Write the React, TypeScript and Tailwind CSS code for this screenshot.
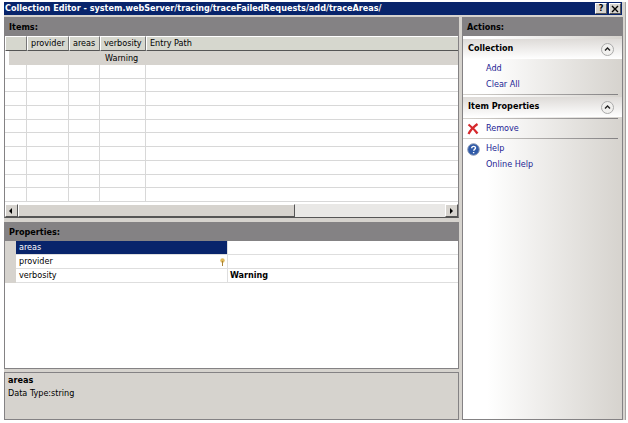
import React from "react";

interface PanelTitleProps {
  children: React.ReactNode;
}

function PanelTitle({ children }: PanelTitleProps): JSX.Element {
  return (
    <h2 className="h-[19px] shrink-0 bg-[#848284] pl-[5px] leading-[20px] font-bold">
      {children}
    </h2>
  );
}

const columns = [
  { label: "", width: "w-[22px]" },
  { label: "provider", width: "w-[42px]" },
  { label: "areas", width: "w-[31px]" },
  { label: "verbosity", width: "w-[46px]" },
  { label: "Entry Path", width: "w-auto" },
];

const emptyRows = Array.from({ length: 10 }, (_, i) => i);

function ItemsTable(): JSX.Element {
  return (
    <div className="flex h-[182px] shrink-0 flex-col border border-t-0 border-[#848284] border-b-[#555] bg-white">
      <table className="h-[166px] w-full table-fixed border-separate border-spacing-0">
        <thead>
          <tr className="h-[15px] bg-[#d6d7ce]">
            {columns.map((col, i) => (
              <th
                key={i}
                className={`${col.width} h-[15px] border-t border-t-white border-b border-b-[#555] border-l border-l-white p-0 pl-[3px] text-left font-normal leading-[13px] whitespace-nowrap not-last:border-r not-last:border-r-[#777]`}
              >
                {col.label}
              </th>
            ))}
          </tr>
        </thead>
        <tbody>
          <tr className="h-[14px] bg-[#d6d3ce]">
            <td className="border-l-4 border-white p-0" />
            <td className="p-0" />
            <td className="p-0" />
            <td className="p-0 pl-[5px] leading-[14px]">Warning</td>
            <td className="p-0" />
          </tr>
          {emptyRows.map((row) => (
            <tr key={row}>
              {columns.map((_, i) => (
                <td
                  key={i}
                  className="border-b border-[#d8d8d8] p-0 not-last:border-r"
                />
              ))}
            </tr>
          ))}
        </tbody>
      </table>
      <div className="mt-auto flex h-[13px] bg-[#e9e8e6]">
        <ScrollButton label="Scroll left" points="6,3 6,9 3,6" />
        <div className="w-[277px] border border-t-white border-r-[#555] border-b-[#555] border-l-white bg-[#d6d3ce]" />
        <div className="flex-1" />
        <ScrollButton label="Scroll right" points="4,3 4,9 7,6" />
      </div>
    </div>
  );
}

interface ScrollButtonProps {
  label: string;
  points: string;
}

function ScrollButton({ label, points }: ScrollButtonProps): JSX.Element {
  return (
    <button
      aria-label={label}
      className="w-[13px] border border-t-white border-r-[#555] border-b-[#555] border-l-white bg-[#d6d3ce]"
    >
      <svg viewBox="0 0 11 11" className="size-[11px]">
        <polygon points={points} fill="#000" />
      </svg>
    </button>
  );
}

const properties = [
  { name: "areas", value: "", selected: true, required: false },
  { name: "provider", value: "", selected: false, required: true },
  { name: "verbosity", value: "Warning", selected: false, required: false },
];

function PropertyGrid(): JSX.Element {
  return (
    <div className="flex-1 border border-t-0 border-[#848284] bg-white">
      <table className="w-full table-fixed border-separate border-spacing-0">
        <tbody>
          {properties.map((prop) => (
            <tr key={prop.name} className="h-[14px]">
              <td className="w-[11px] bg-[#d6d3ce] p-0" />
              <th
                className={`w-[212px] border-r border-b border-[#dedede] p-0 pl-[3px] text-left font-normal leading-[13px] ${
                  prop.selected ? "bg-[#08246b] text-white" : ""
                }`}
              >
                <div className="flex items-center justify-between pr-[2px]">
                  {prop.name}
                  {prop.required && (
                    <svg viewBox="0 0 5 8" className="h-2 w-[5px]">
                      <circle cx="2.5" cy="2.5" r="2.2" fill="#dfb85a" />
                      <path d="M2.5 3v5" stroke="#a98438" />
                    </svg>
                  )}
                </div>
              </th>
              <td className="border-b border-[#dedede] p-0 pl-[2px] leading-[13px] font-bold">
                {prop.value}
              </td>
            </tr>
          ))}
        </tbody>
      </table>
    </div>
  );
}

interface SectionHeaderProps {
  title: string;
}

function SectionHeader({ title }: SectionHeaderProps): JSX.Element {
  return (
    <div className="flex h-5 items-center justify-between bg-linear-to-b from-[#dedbd8] to-white pr-2 pl-[5px]">
      <h3 className="font-bold">{title}</h3>
      <button aria-label={`Collapse ${title}`}>
        <svg viewBox="0 0 13 13" className="size-[13px]" fill="none">
          <circle cx="6.5" cy="6.5" r="6" fill="#f1f0ee" stroke="#aaa" />
          <path d="M4 7.5l2.5-2.5L9 7.5" stroke="#222" strokeWidth="1.4" />
        </svg>
      </button>
    </div>
  );
}

interface ActionProps {
  label: string;
  icon?: React.ReactNode;
}

function Action({ label, icon }: ActionProps): JSX.Element {
  return (
    <a href="#" className="flex h-4 items-center text-[#1c1c94]">
      <span className="w-[23px] pl-1">{icon}</span>
      {label}
    </a>
  );
}

function Divider(): JSX.Element {
  return (
    <hr className="mr-1 h-px border-0 bg-linear-to-r from-[#d6d3ce] to-[#848284]" />
  );
}

function RemoveIcon(): JSX.Element {
  return (
    <svg viewBox="0 0 12 12" className="size-3" fill="none">
      <path
        d="M1.5 1.5C4 3.5 8 7 10.5 10.5M10.5 1C7 3.5 3.5 7 1.5 11"
        stroke="#d6282c"
        strokeWidth="2.2"
      />
    </svg>
  );
}

function HelpIcon(): JSX.Element {
  return (
    <svg viewBox="0 0 13 13" className="size-[13px]" fill="none">
      <circle cx="6.5" cy="6.5" r="5.8" fill="#2f5aa8" stroke="#8f9db8" />
      <path
        d="M4.7 5.2c0-2.4 3.8-2.3 3.8-.2 0 1.4-1.8 1.3-1.8 2.7M6.6 9v1.3"
        stroke="#fff"
        strokeWidth="1.4"
      />
    </svg>
  );
}

export default function App(): JSX.Element {
  return (
    <div className="h-screen bg-white pt-[2px] pr-[2px] pb-[3px] pl-1 font-['DejaVu_Sans_Condensed','DejaVu_Sans',sans-serif] text-[9px] text-black">
      <div className="flex h-full flex-col border-r border-[#a5a3a0] bg-[#d6d3ce]">
        <header className="mr-[3px] flex h-[13px] shrink-0 items-center bg-[#08246b] pr-px pl-px text-white">
          <h1 className="flex-1 leading-[13px] font-bold whitespace-nowrap">
            Collection Editor -
            system.webServer/tracing/traceFailedRequests/add/traceAreas/
          </h1>
          <button
            aria-label="Help"
            className="mr-[2px] flex h-[11px] w-3 items-center justify-center border border-t-white border-r-[#555] border-b-[#555] border-l-white bg-[#d6d3ce] font-bold text-black"
          >
            ?
          </button>
          <button
            aria-label="Close"
            className="flex h-[11px] w-3 items-center justify-center border border-t-white border-r-[#555] border-b-[#555] border-l-white bg-[#d6d3ce]"
          >
            <svg viewBox="0 0 8 8" className="size-2">
              <path d="M1 1l6 6M7 1L1 7" stroke="#000" strokeWidth="1.4" />
            </svg>
          </button>
        </header>
        <div className="flex min-h-0 flex-1 gap-[3px] pt-[2px] pr-[2px]">
          <main className="flex min-w-0 flex-1 flex-col">
            <PanelTitle>Items:</PanelTitle>
            <ItemsTable />
            <div className="h-1 shrink-0" />
            <PanelTitle>Properties:</PanelTitle>
            <PropertyGrid />
            <section className="mt-[3px] h-12 shrink-0 border border-[#848284] px-[3px] pt-px">
              <h3 className="leading-[13px] font-bold">areas</h3>
              <p className="leading-[13px]">Data Type:string</p>
            </section>
          </main>
          <aside className="flex w-[161px] flex-col">
            <PanelTitle>Actions:</PanelTitle>
            <div className="flex-1 border border-t-0 border-[#848284] bg-linear-to-r from-white from-15% to-[#d6d3ce] pt-[3px]">
              <SectionHeader title="Collection" />
              <div className="pt-[2px] pb-px">
                <Action label="Add" />
                <Action label="Clear All" />
              </div>
              <Divider />
              <div className="pt-[2px] pb-px">
                <SectionHeader title="Item Properties" />
              </div>
              <Divider />
              <div className="pt-[2px] pb-px">
                <Action label="Remove" icon={<RemoveIcon />} />
              </div>
              <Divider />
              <div className="pt-[2px]">
                <Action label="Help" icon={<HelpIcon />} />
                <Action label="Online Help" />
              </div>
            </div>
          </aside>
        </div>
      </div>
    </div>
  );
}
